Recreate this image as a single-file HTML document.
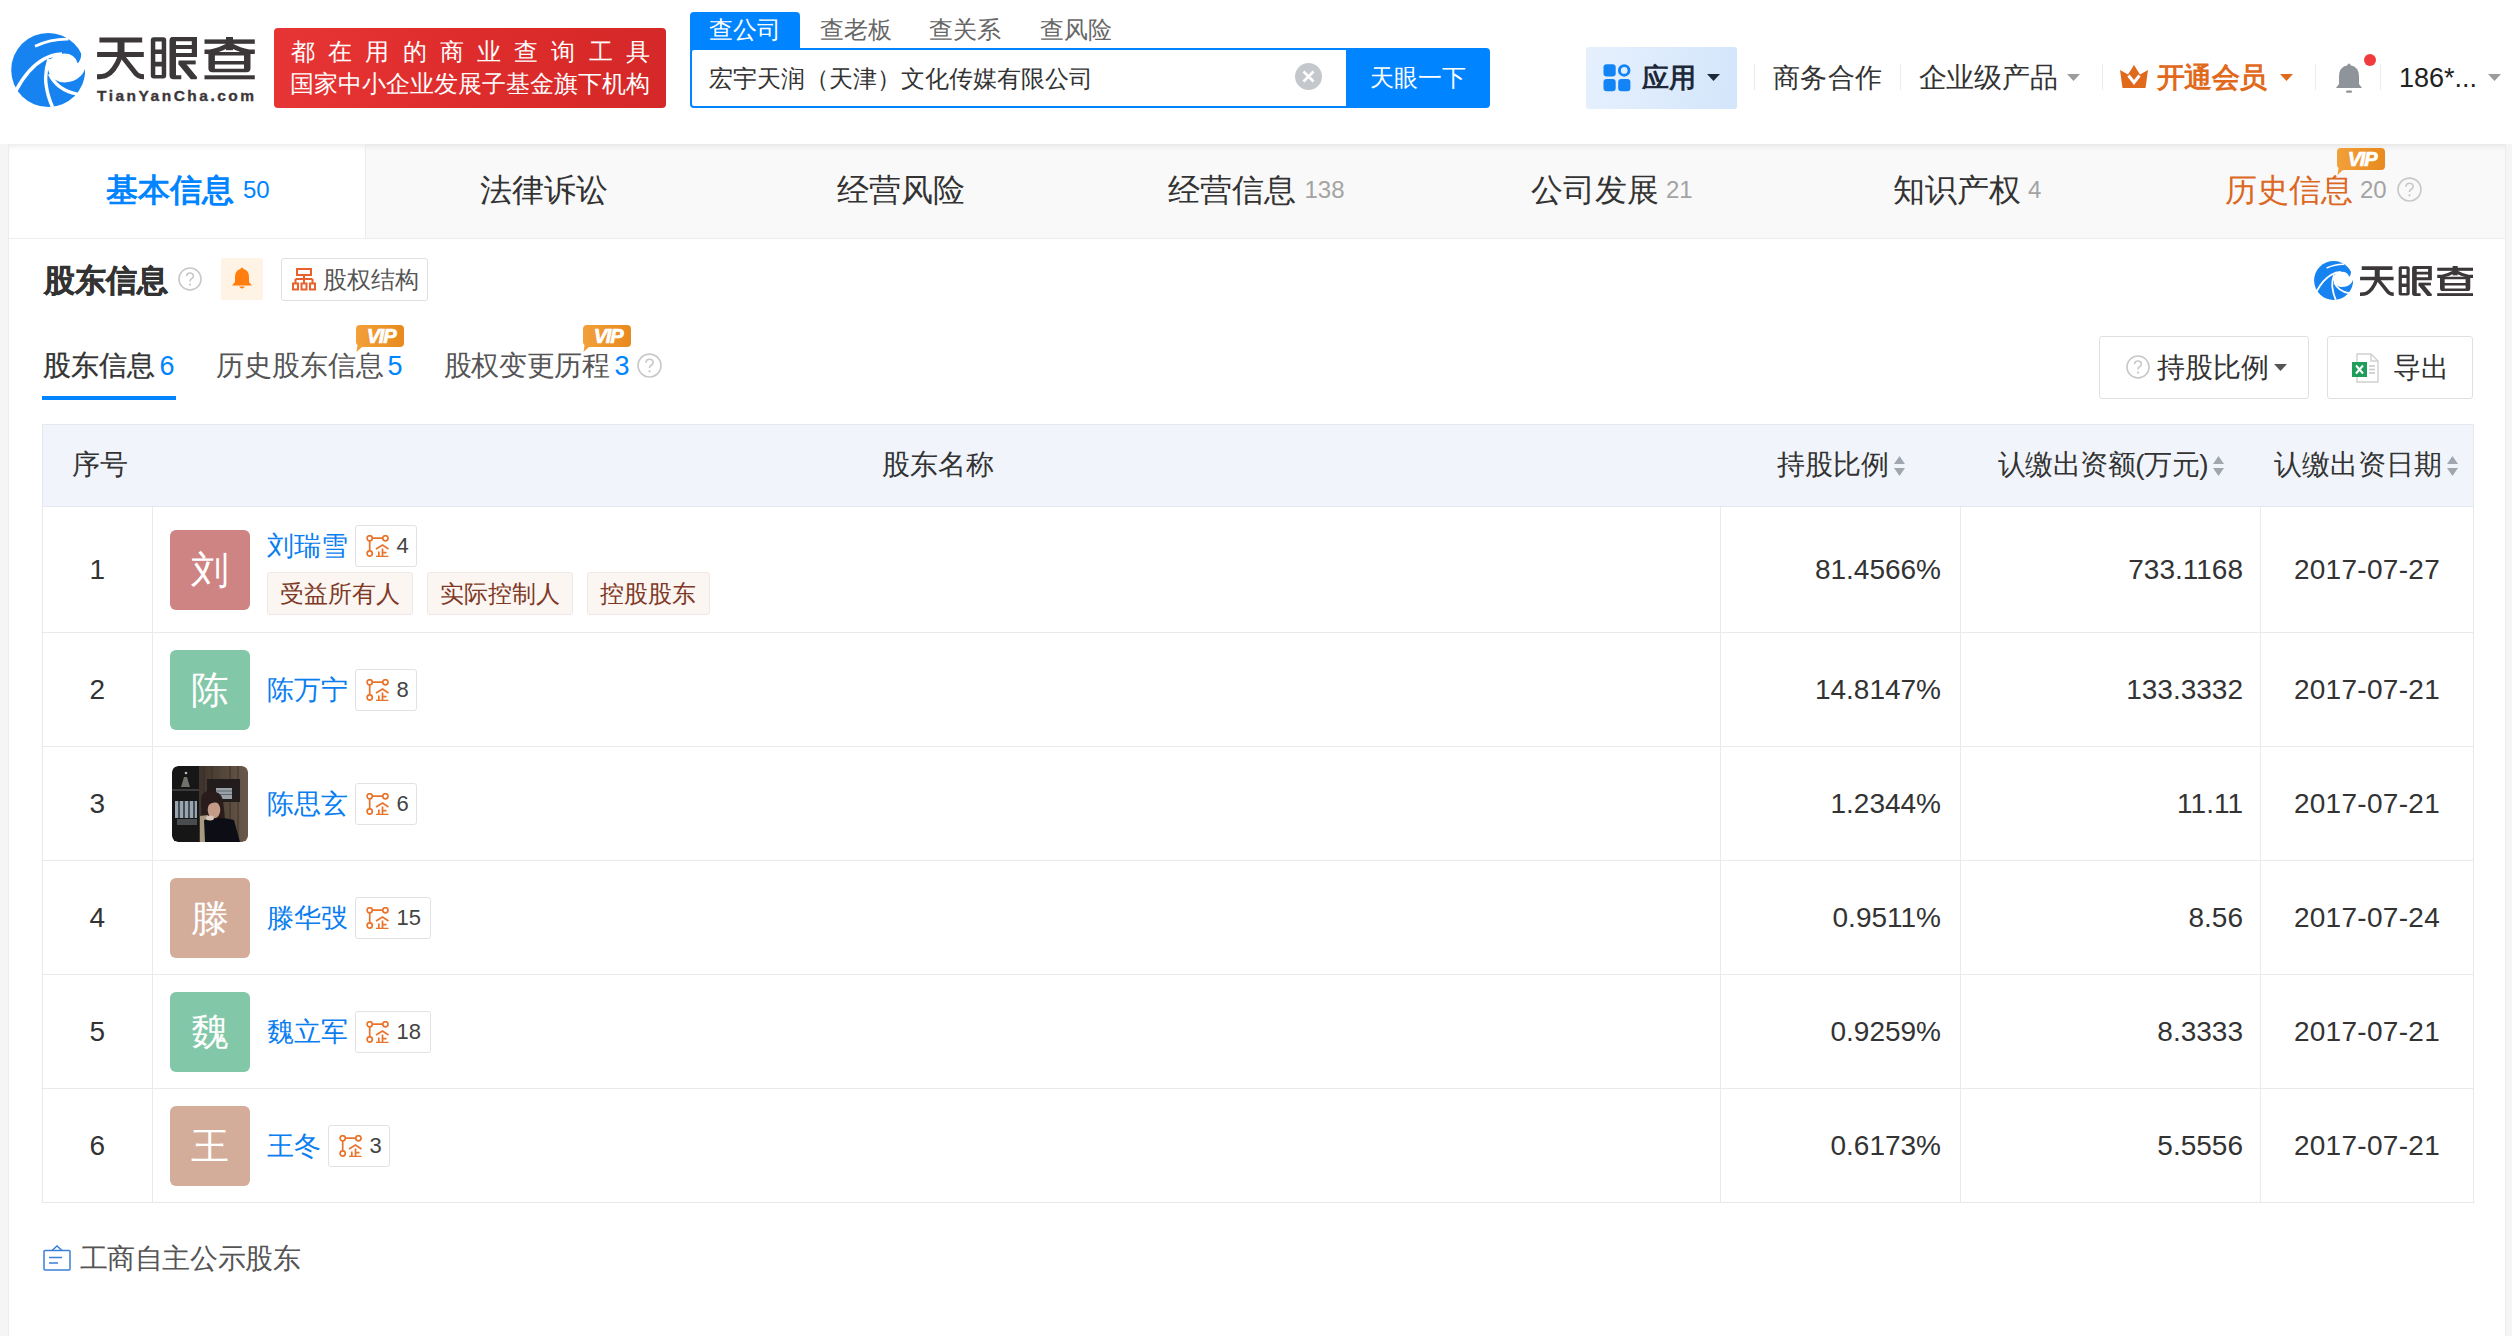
<!DOCTYPE html>
<html><head><meta charset="utf-8">
<style>
*{margin:0;padding:0;box-sizing:border-box}
html,body{width:2512px;height:1336px;overflow:hidden;background:#fff}
body{position:relative;font-family:"Liberation Sans",sans-serif;color:#333}
.a{position:absolute;white-space:nowrap}
.t{position:absolute;white-space:nowrap;line-height:40px;height:40px}
svg{display:block}
</style></head><body>
<svg width="0" height="0" style="position:absolute">
 <defs>
  <symbol id="lgIcon" viewBox="11 33 74 74">
   <circle cx="48.2" cy="70" r="37" fill="#1683f1"/>
   <path d="M66 36.5 Q78.5 42 81 52 Q82 59 77.5 63.5 L88 66 L92 28 Z" fill="#fff"/>
   <path d="M47.5 63 Q52 54.5 64 53.5 Q75 53.5 77.5 63 L86 64 Q85 76 73 81 Q62 84.5 54.5 79.5 Q46.5 73 47.5 63 Z" fill="#fff"/>
   <path d="M16 90.5 Q28 68 44 59 Q52 54.5 62 54" stroke="#fff" stroke-width="3.6" fill="none"/>
   <path d="M35 46.3 Q51 38.8 68.5 39.2" stroke="#fff" stroke-width="2.8" fill="none"/>
   <path d="M49 59 Q44.5 72 46 84 Q47.5 96 52.5 107" stroke="#fff" stroke-width="3.4" fill="none"/>
   <path d="M49.5 74 Q57 90 77 94" stroke="#fff" stroke-width="3.3" fill="none"/>
  </symbol>
  <symbol id="lgText" viewBox="97 37 158 43">
   <g fill="none" stroke="#3c3739" stroke-width="5">
    <path d="M99.4 40 H142.2"/>
    <path d="M97.1 54.5 H143.8"/>
    <path d="M121 42 V54" stroke-width="7"/>
    <path d="M120.5 56 C117 65 112 73 106 75.5 Q103 76.8 97 76.8"/>
    <path d="M122 56 L135 72.5 Q138 76.8 144 76.8"/>
   </g>
   <g fill="#3c3739">
    <path fill-rule="evenodd" d="M153.8 37.3 H163.2 Q166.2 37.3 166.2 40.3 V75.6 Q166.2 78.6 163.2 78.6 H153.8 Q150.8 78.6 150.8 75.6 V40.3 Q150.8 37.3 153.8 37.3 Z M155.3 41.4 V49.4 H161.7 V41.4 Z M155.3 53.9 V61.8 H161.7 V53.9 Z M155.3 66.6 V74.9 H161.7 V66.6 Z"/>
    <path d="M173 36.8 H197 V57 H176 V75.3 H181.3 V79.3 H173.5 Q169.5 79.3 169.5 75.3 V40.3 Q169.5 36.8 173 36.8 Z M176 41.2 V53 H191.8 V49 H176 V45.1 H191.8 V41.2 Z" fill-rule="evenodd"/>
    <rect x="178.6" y="60.5" width="17.1" height="3.9"/>
    <path d="M178.6 62 L184.6 62 L197.2 77.2 L196.6 79.3 L190.8 79.3 L178.6 64.6 Z"/>
    <rect x="204.5" y="39.4" width="50.3" height="4.4"/>
    <rect x="226" y="36.8" width="7" height="13.4"/>
    <path fill-rule="evenodd" d="M208.4 52.1 H250.5 V68.3 Q250.5 72.3 246.5 72.3 H212.4 Q208.4 72.3 208.4 68.3 Z M214.9 55.6 V60.9 H244 V55.6 Z M214.9 64.4 V68.8 H244 V64.4 Z"/>
    <rect x="204.5" y="75.3" width="50.3" height="4"/>
   </g>
   <g fill="none" stroke="#3c3739" stroke-width="4.4">
    <path d="M228.5 45 Q219 50.5 210 51.7 H204.5"/>
    <path d="M230.5 45 Q240 50.5 249 51.7 H254.8"/>
   </g>
  </symbol>
  <symbol id="netIco" viewBox="0 0 22 22">
   <g fill="none" stroke="#e8742c" stroke-width="1.7">
    <circle cx="3.2" cy="3.2" r="2.6"/><circle cx="18.9" cy="3.2" r="2.6"/><circle cx="3.2" cy="18.5" r="2.6"/>
    <path d="M5.8 3.2 H16.3 M3.2 5.8 V15.9"/>
    <path d="M9.5 14 L16 10 L22 14" />
    <path d="M16 13.5 V21.5 M12.3 16.5 V21.5 M16 17.7 H20 M9.5 21.5 H22" />
   </g>
  </symbol>
  <symbol id="vip" viewBox="0 0 48 27">
   <defs><linearGradient id="vg" x1="0" y1="0" x2="1" y2="0"><stop offset="0" stop-color="#f2a03a"/><stop offset="1" stop-color="#e88a1e"/></linearGradient></defs>
   <path d="M4 0 H44 Q48 0 48 4 V18 Q48 22 44 22 H6 L0.5 27 L1.5 20 Q0 19 0 17 V4 Q0 0 4 0 Z" fill="url(#vg)"/>
   <text x="25" y="18.2" text-anchor="middle" font-family="Liberation Sans" font-weight="bold" font-style="italic" font-size="20" fill="#fff" stroke="#fff" stroke-width="0.7" letter-spacing="-1.2">VIP</text>
  </symbol>
  <symbol id="qIco" viewBox="0 0 24 24">
   <circle cx="12" cy="12" r="11" fill="none" stroke="#c8c8c8" stroke-width="1.6"/>
   <path d="M8.6 9.3 Q8.6 6 12 6 Q15.4 6 15.4 9 Q15.4 11 13.2 12 Q12 12.6 12 14.5" fill="none" stroke="#c8c8c8" stroke-width="1.6"/>
   <circle cx="12" cy="17.6" r="1.1" fill="#c8c8c8"/>
  </symbol>
  <symbol id="sortIco" viewBox="0 0 11 20">
   <path d="M5.5 0 L11 8 H0 Z M0 12 H11 L5.5 20 Z" fill="#a0a6b0"/>
  </symbol>
 </defs>
</svg>

<!-- page gutters -->
<div class="a" style="left:0;top:144px;width:9px;height:1192px;background:#f5f5f5;border-right:1px solid #ececec"></div>
<div class="a" style="left:2505px;top:144px;width:7px;height:1192px;background:#f5f5f5;border-left:1px solid #ececec"></div>

<!-- HEADER -->
<div class="a" style="left:0;top:0;width:2512px;height:144px;background:#fff"></div>
<svg class="a" style="left:11px;top:33px" width="74" height="74"><use href="#lgIcon"/></svg>
<svg class="a" style="left:97px;top:37px" width="158" height="43"><use href="#lgText"/></svg>
<div class="a" style="left:97px;top:86px;font-size:15.5px;font-weight:bold;letter-spacing:2.5px;line-height:20px;color:#3c3739;-webkit-text-stroke:0.35px #3c3739">TianYanCha.com</div>

<div class="a" style="left:274px;top:28px;width:392px;height:80px;border-radius:4px;background:linear-gradient(90deg,#e73535,#de2c2c 50%,#d52828)"></div>
<div class="t" style="left:291px;top:32px;font-size:24px;color:#fff;letter-spacing:13.2px">都在用的商业查询工具</div>
<div class="t" style="left:290px;top:63.5px;font-size:24px;color:#fff">国家中小企业发展子基金旗下机构</div>

<div class="a" style="left:690px;top:12px;width:110px;height:38px;background:#0084ff;border-radius:4px 4px 0 0"></div>
<div class="t" style="left:709px;top:9.5px;font-size:24px;color:#fff">查公司</div>
<div class="t" style="left:819.5px;top:9.5px;font-size:24px;color:#666">查老板</div>
<div class="t" style="left:929px;top:9.5px;font-size:24px;color:#666">查关系</div>
<div class="t" style="left:1039.5px;top:9.5px;font-size:24px;color:#666">查风险</div>

<div class="a" style="left:690px;top:48px;width:660px;height:60px;border:2px solid #0084ff;border-radius:4px 0 0 4px;background:#fff"></div>
<div class="t" style="left:708.5px;top:59px;font-size:24px;color:#333">宏宇天润（天津）文化传媒有限公司</div>
<div class="a" style="left:1294.5px;top:63px;width:27px;height:27px;border-radius:50%;background:#c4c7cb"></div>
<svg class="a" style="left:1294.5px;top:63px" width="27" height="27"><path d="M8.5 8.5 L18.5 18.5 M18.5 8.5 L8.5 18.5" stroke="#fff" stroke-width="2.6"/></svg>
<div class="a" style="left:1346px;top:48px;width:144px;height:60px;background:#0084ff;border-radius:0 4px 4px 0"></div>
<div class="t" style="left:1369.5px;top:57.5px;font-size:24px;color:#fff">天眼一下</div>

<div class="a" style="left:1586px;top:47px;width:151px;height:62px;border-radius:3px;background:linear-gradient(100deg,#e6f0fd,#dbeafc 60%,#d3e5fb)"></div>
<svg class="a" style="left:1603px;top:64px" width="28" height="28" viewBox="0 0 28 28">
 <rect x="0.5" y="0.3" width="12.2" height="12.2" rx="3.2" fill="#1384f5"/>
 <circle cx="21.2" cy="6.4" r="4.8" fill="none" stroke="#1384f5" stroke-width="2.9"/>
 <rect x="0.5" y="15" width="12.2" height="12.2" rx="3.2" fill="#1384f5"/>
 <rect x="15.2" y="15" width="12.2" height="12.2" rx="3.2" fill="#1384f5"/>
</svg>
<div class="t" style="left:1642px;top:57.5px;font-size:27px;font-weight:bold;color:#1d2838">应用</div>
<svg class="a" style="left:1707px;top:74px" width="13" height="7"><path d="M0 0 H13 L6.5 7 Z" fill="#1d2838"/></svg>

<div class="a" style="left:1754px;top:64px;width:1px;height:26px;background:#ececec"></div>
<div class="t" style="left:1773px;top:57.5px;font-size:27px;letter-spacing:0.3px;color:#333">商务合作</div>
<div class="a" style="left:1900px;top:64px;width:1px;height:26px;background:#ececec"></div>
<div class="t" style="left:1918.5px;top:57.5px;font-size:28px;letter-spacing:-0.25px;color:#333">企业级产品</div>
<svg class="a" style="left:2067px;top:74px" width="13" height="7"><path d="M0 0 H13 L6.5 7 Z" fill="#9c9c9c"/></svg>
<div class="a" style="left:2102px;top:64px;width:1px;height:26px;background:#ececec"></div>
<svg class="a" style="left:2120px;top:65px" width="28" height="24" viewBox="0 0 28 24">
 <path d="M0 5 L8 9.5 L14 0 L20 9.5 L28 5 L25.5 23 H2.5 Z" fill="#e0691c"/>
 <path d="M8.5 10.5 L14 17.5 L19.5 10.5" fill="none" stroke="#fff" stroke-width="3"/>
</svg>
<div class="t" style="left:2156.5px;top:57.5px;font-size:28px;letter-spacing:-0.5px;font-weight:bold;color:#e0691c">开通会员</div>
<svg class="a" style="left:2280px;top:74px" width="13" height="7"><path d="M0 0 H13 L6.5 7 Z" fill="#e0691c"/></svg>
<div class="a" style="left:2315px;top:64px;width:1px;height:26px;background:#ececec"></div>
<svg class="a" style="left:2334px;top:62px" width="30" height="32" viewBox="0 0 30 32">
 <path d="M15 1.5 Q16.5 1.5 16.5 3.2 Q25 5 25 14 V22 L28 26 H2 L5 22 V14 Q5 5 13.5 3.2 Q13.5 1.5 15 1.5 Z" fill="#8f949a"/>
 <rect x="12" y="28.5" width="6" height="2.2" rx="1" fill="#8f949a"/>
</svg>
<div class="a" style="left:2364px;top:53.5px;width:12px;height:12px;border-radius:50%;background:#f03c3c"></div>
<div class="a" style="left:2380px;top:64px;width:1px;height:26px;background:#ececec"></div>
<div class="t" style="left:2399px;top:58px;font-size:27px;color:#222">186*...</div>
<svg class="a" style="left:2488px;top:74px" width="13" height="7"><path d="M0 0 H13 L6.5 7 Z" fill="#9c9c9c"/></svg>

<!-- TAB BAR -->
<div class="a" style="left:9px;top:144px;width:2496px;height:95px;background:#f9f9f9;border-bottom:1px solid #ededed;box-shadow:inset 0 6px 6px -4px rgba(0,0,0,0.09)"></div>
<div class="a" style="left:9px;top:144px;width:356px;height:94px;background:#fff;box-shadow:inset 0 6px 6px -4px rgba(0,0,0,0.09)"></div>
<div class="a" style="left:365px;top:144px;width:1px;height:95px;background:#ececec"></div>
<div class="t" style="left:106px;top:170px;font-size:32px;font-weight:bold;color:#0084ff">基本信息</div>
<div class="t" style="left:243px;top:169.5px;font-size:24px;color:#0084ff">50</div>
<div class="t" style="left:480px;top:170px;font-size:32px;color:#333">法律诉讼</div>
<div class="t" style="left:836.5px;top:170px;font-size:32px;color:#333">经营风险</div>
<div class="t" style="left:1168px;top:170px;font-size:32px;color:#333">经营信息</div>
<div class="t" style="left:1304.5px;top:169.5px;font-size:24px;color:#a3a3a3">138</div>
<div class="t" style="left:1531px;top:170px;font-size:32px;color:#333">公司发展</div>
<div class="t" style="left:1666px;top:169.5px;font-size:24px;color:#a3a3a3">21</div>
<div class="t" style="left:1892.5px;top:170px;font-size:32px;color:#333">知识产权</div>
<div class="t" style="left:2028px;top:169.5px;font-size:24px;color:#a3a3a3">4</div>
<div class="t" style="left:2224.5px;top:170px;font-size:32px;color:#dc671f">历史信息</div>
<div class="t" style="left:2360px;top:169.5px;font-size:24px;color:#a3a3a3">20</div>
<svg class="a" style="left:2397px;top:177px" width="25" height="25"><use href="#qIco"/></svg>
<svg class="a" style="left:2337px;top:148px" width="48" height="27"><use href="#vip"/></svg>

<!-- SECTION HEADER -->
<div class="t" style="left:43.5px;top:260.5px;font-size:31px;font-weight:bold;color:#333;-webkit-text-stroke:0.5px #333">股东信息</div>
<svg class="a" style="left:178px;top:267px" width="24" height="24"><use href="#qIco"/></svg>
<div class="a" style="left:221px;top:258px;width:42px;height:42px;border-radius:3px;background:#fff3e6"></div>
<svg class="a" style="left:231px;top:267px" width="22" height="23" viewBox="0 0 22 23">
 <path d="M11 0.5 Q12.3 0.5 12.5 2 Q18 3.5 18 10 V15 L21 18.5 H1 L4 15 V10 Q4 3.5 9.5 2 Q9.7 0.5 11 0.5 Z" fill="#ff7e0d"/>
 <path d="M8 19.5 Q11 23.5 14 19.5 Z" fill="#ff7e0d"/>
</svg>
<div class="a" style="left:281px;top:258px;width:147px;height:43px;border:1px solid #e0e0e0;border-radius:3px;background:#fff"></div>
<svg class="a" style="left:292px;top:268px" width="24" height="23" viewBox="0 0 24 23">
 <g fill="none" stroke="#e8612c" stroke-width="2">
  <rect x="5" y="1" width="14" height="6"/>
  <path d="M12 7 V11 M3.5 11 H20.5 M3.5 11 V15 M12 11 V15 M20.5 11 V15"/>
  <rect x="1" y="15.5" width="5" height="6"/><rect x="9.5" y="15.5" width="5" height="6"/><rect x="18" y="15.5" width="5" height="6"/>
 </g>
</svg>
<div class="t" style="left:323px;top:259.5px;font-size:24px;color:#555">股权结构</div>

<svg class="a" style="left:2314px;top:261px" width="39" height="39"><use href="#lgIcon"/></svg>
<svg class="a" style="left:2359.5px;top:265.5px" width="113.5" height="30.5" preserveAspectRatio="none" viewBox="97 37 158 43"><use href="#lgText" x="97" y="37" width="158" height="43"/></svg>

<!-- SUB TABS -->
<div class="t" style="left:42.5px;top:346px;font-size:28px;color:#333;-webkit-text-stroke:0.3px #333">股东信息</div>
<div class="t" style="left:159.5px;top:346px;font-size:27px;color:#0084ff">6</div>
<div class="a" style="left:42px;top:396px;width:134px;height:4px;background:#0084ff"></div>
<div class="t" style="left:215.5px;top:346px;font-size:28px;color:#555">历史股东信息</div>
<div class="t" style="left:387.5px;top:346px;font-size:27px;color:#0084ff">5</div>
<svg class="a" style="left:356px;top:325px" width="48" height="27"><use href="#vip"/></svg>
<div class="t" style="left:443.5px;top:346px;font-size:28px;letter-spacing:-0.3px;color:#555">股权变更历程</div>
<div class="t" style="left:614.5px;top:346px;font-size:27px;color:#0084ff">3</div>
<svg class="a" style="left:637px;top:353px" width="25" height="25"><use href="#qIco"/></svg>
<svg class="a" style="left:583px;top:325px" width="48" height="27"><use href="#vip"/></svg>

<div class="a" style="left:2099px;top:336px;width:210px;height:63px;border:1px solid #e0e0e0;border-radius:3px"></div>
<svg class="a" style="left:2126px;top:355px" width="24" height="24"><use href="#qIco"/></svg>
<div class="t" style="left:2157px;top:348px;font-size:28px;color:#333">持股比例</div>
<svg class="a" style="left:2274px;top:364px" width="13" height="7"><path d="M0 0 H13 L6.5 7 Z" fill="#555"/></svg>
<div class="a" style="left:2327px;top:336px;width:146px;height:63px;border:1px solid #e0e0e0;border-radius:3px"></div>
<svg class="a" style="left:2352px;top:353px" width="28" height="30" viewBox="0 0 28 30">
 <path d="M5 1 H19 L26 8 V29 H5 Z" fill="#fff" stroke="#d0d0d0" stroke-width="1.4"/>
 <path d="M19 1 V8 H26" fill="none" stroke="#d0d0d0" stroke-width="1.4"/>
 <rect x="0" y="9" width="15" height="15" fill="#1f9e5b"/>
 <path d="M4 12.5 L11 20.5 M11 12.5 L4 20.5" stroke="#fff" stroke-width="2"/>
 <path d="M17 13 H23 M17 16.5 H23 M17 20 H23" stroke="#c8c8c8" stroke-width="1.5"/>
</svg>
<div class="t" style="left:2392.5px;top:347.5px;font-size:28px;color:#333">导出</div>

<!-- TABLE -->
<div class="a" style="left:42px;top:424px;width:2432px;height:779px;border:1px solid #e6e8eb;background:#fff"></div>
<div class="a" style="left:43px;top:425px;width:2430px;height:82px;background:#f1f5fb;border-bottom:1px solid #e3e8ee"></div>
<div class="t" style="left:71.5px;top:445px;font-size:28px;color:#333">序号</div>
<div class="t" style="left:881.5px;top:445px;font-size:28px;color:#333">股东名称</div>
<div class="t" style="left:1776.5px;top:445px;font-size:28px;color:#333">持股比例</div>
<svg class="a" style="left:1894px;top:456px" width="11" height="20"><use href="#sortIco"/></svg>
<div class="t" style="left:1997.5px;top:445px;font-size:28px;letter-spacing:-0.45px;color:#333">认缴出资额(万元)</div>
<svg class="a" style="left:2213px;top:456px" width="11" height="20"><use href="#sortIco"/></svg>
<div class="t" style="left:2273.5px;top:445px;font-size:28px;color:#333">认缴出资日期</div>
<svg class="a" style="left:2447px;top:456px" width="11" height="20"><use href="#sortIco"/></svg>
<div class="a" style="left:152px;top:507px;width:1px;height:696px;background:#eaeaea"></div>
<div class="a" style="left:1720px;top:507px;width:1px;height:696px;background:#eaeaea"></div>
<div class="a" style="left:1960px;top:507px;width:1px;height:696px;background:#eaeaea"></div>
<div class="a" style="left:2260px;top:507px;width:1px;height:696px;background:#eaeaea"></div>

<div class="a" style="left:43px;top:632px;width:2430px;height:1px;background:#eaeaea"></div>
<div class="t" style="left:43px;width:109px;text-align:center;letter-spacing:0.3px;top:550.0px;font-size:28px;color:#333">1</div>
<div class="a" style="left:170px;top:530.0px;width:80px;height:80px;border-radius:6px;background:#cf8484;color:#fff;font-size:38px;line-height:80px;text-align:center">刘</div>
<div class="t" style="left:266.5px;top:526.0px;font-size:27px;color:#0a7ef0">刘瑞雪</div><div class="a" style="left:354.5px;top:525.0px;width:62px;height:42px;border:1px solid #e2e2e2;border-radius:3px"></div><svg class="a" style="left:365.5px;top:535.0px" width="23" height="22"><use href="#netIco"/></svg><div class="t" style="left:396.5px;top:526.0px;font-size:22px;color:#444">4</div>
<div class="a" style="left:266.5px;top:572px;width:146px;height:43px;border:1px solid #efe8e5;border-radius:3px;background:#fcf6f3;color:#7e3a26;font-size:24px;line-height:41px;text-align:center">受益所有人</div>
<div class="a" style="left:426.5px;top:572px;width:146px;height:43px;border:1px solid #efe8e5;border-radius:3px;background:#fcf6f3;color:#7e3a26;font-size:24px;line-height:41px;text-align:center">实际控制人</div>
<div class="a" style="left:586.5px;top:572px;width:123px;height:43px;border:1px solid #efe8e5;border-radius:3px;background:#fcf6f3;color:#7e3a26;font-size:24px;line-height:41px;text-align:center">控股股东</div>
<div class="t" style="left:1721px;width:220px;text-align:right;top:549.5px;font-size:28px;color:#333">81.4566%</div>
<div class="t" style="left:1961px;width:282px;text-align:right;top:549.5px;font-size:28px;color:#333">733.1168</div>
<div class="t" style="left:2261px;width:212px;text-align:center;letter-spacing:0.3px;top:549.5px;font-size:28px;color:#333">2017-07-27</div>
<div class="a" style="left:43px;top:746px;width:2430px;height:1px;background:#eaeaea"></div>
<div class="t" style="left:43px;width:109px;text-align:center;letter-spacing:0.3px;top:670.0px;font-size:28px;color:#333">2</div>
<div class="a" style="left:170px;top:650.0px;width:80px;height:80px;border-radius:6px;background:#82c7a7;color:#fff;font-size:38px;line-height:80px;text-align:center">陈</div>
<div class="t" style="left:266.5px;top:670.0px;font-size:27px;color:#0a7ef0">陈万宁</div><div class="a" style="left:354.5px;top:669.0px;width:62px;height:42px;border:1px solid #e2e2e2;border-radius:3px"></div><svg class="a" style="left:365.5px;top:679.0px" width="23" height="22"><use href="#netIco"/></svg><div class="t" style="left:396.5px;top:670.0px;font-size:22px;color:#444">8</div>
<div class="t" style="left:1721px;width:220px;text-align:right;top:669.5px;font-size:28px;color:#333">14.8147%</div>
<div class="t" style="left:1961px;width:282px;text-align:right;top:669.5px;font-size:28px;color:#333">133.3332</div>
<div class="t" style="left:2261px;width:212px;text-align:center;letter-spacing:0.3px;top:669.5px;font-size:28px;color:#333">2017-07-21</div>
<div class="a" style="left:43px;top:860px;width:2430px;height:1px;background:#eaeaea"></div>
<div class="t" style="left:43px;width:109px;text-align:center;letter-spacing:0.3px;top:784.0px;font-size:28px;color:#333">3</div>
<svg class="a" style="left:172px;top:766px;border-radius:6px" width="76" height="76" viewBox="0 0 76 76">
<defs><clipPath id="pc"><rect width="76" height="76" rx="6"/></clipPath>
<linearGradient id="wood" x1="0" x2="1"><stop offset="0" stop-color="#3e342c"/><stop offset="0.5" stop-color="#54463a"/><stop offset="1" stop-color="#6a5a4b"/></linearGradient></defs>
<filter id="pblur"><feGaussianBlur stdDeviation="0.55"/></filter><g clip-path="url(#pc)"><g filter="url(#pblur)">
<rect width="76" height="76" fill="#141313"/>
<rect x="27" y="0" width="49" height="76" fill="url(#wood)"/>
<path d="M32 0V76M40 0V76M58 0V76M66 0V76" stroke="#3a2f27" stroke-width="1.5" opacity="0.6"/>
<rect x="35" y="13" width="33" height="23" fill="#221d1a"/>
<rect x="44" y="22" width="16" height="11" fill="#9aa1a8"/>
<path d="M44 25H60M44 28.5H60" stroke="#5d646b" stroke-width="1"/>
<path d="M9 21 L12 11 L15 11 L18 21 Z" fill="#6f726c"/>
<circle cx="14" cy="7" r="1.3" fill="#b9bdb3"/>
<rect x="0" y="23" width="27" height="2" fill="#3a3a3a"/>
<rect x="3" y="35" width="22" height="17" fill="#98a4b0"/>
<path d="M7 35V52M12 35V52M17 35V52M22 35V52" stroke="#2a2e33" stroke-width="1.5"/>
<rect x="5" y="53" width="20" height="6" fill="#4a4d4f"/>
<path d="M29 34 Q29 25 38 25 Q49 25 51 34 L54 62 L30 62 Z" fill="#2b1f1a"/>
<ellipse cx="42" cy="44" rx="6.3" ry="8.5" fill="#c49b86"/>
<path d="M34 37 Q38 31 46 33 L47 37 Q40 35 35 40 Z" fill="#2b1f1a"/>
<path d="M28 50 L36 49 L37 76 L28 76 Z" fill="#a89a80"/>
<path d="M32 54 Q48 50 62 54 L68 76 L33 76 Z" fill="#111012"/>
<ellipse cx="38" cy="52" rx="4" ry="2.5" fill="#d8c8bb"/>
</g></g></svg>
<div class="t" style="left:266.5px;top:784.0px;font-size:27px;color:#0a7ef0">陈思玄</div><div class="a" style="left:354.5px;top:783.0px;width:62px;height:42px;border:1px solid #e2e2e2;border-radius:3px"></div><svg class="a" style="left:365.5px;top:793.0px" width="23" height="22"><use href="#netIco"/></svg><div class="t" style="left:396.5px;top:784.0px;font-size:22px;color:#444">6</div>
<div class="t" style="left:1721px;width:220px;text-align:right;top:783.5px;font-size:28px;color:#333">1.2344%</div>
<div class="t" style="left:1961px;width:282px;text-align:right;top:783.5px;font-size:28px;color:#333">11.11</div>
<div class="t" style="left:2261px;width:212px;text-align:center;letter-spacing:0.3px;top:783.5px;font-size:28px;color:#333">2017-07-21</div>
<div class="a" style="left:43px;top:974px;width:2430px;height:1px;background:#eaeaea"></div>
<div class="t" style="left:43px;width:109px;text-align:center;letter-spacing:0.3px;top:898.0px;font-size:28px;color:#333">4</div>
<div class="a" style="left:170px;top:878.0px;width:80px;height:80px;border-radius:6px;background:#d3ac9a;color:#fff;font-size:38px;line-height:80px;text-align:center">滕</div>
<div class="t" style="left:266.5px;top:898.0px;font-size:27px;color:#0a7ef0">滕华弢</div><div class="a" style="left:354.5px;top:897.0px;width:76px;height:42px;border:1px solid #e2e2e2;border-radius:3px"></div><svg class="a" style="left:365.5px;top:907.0px" width="23" height="22"><use href="#netIco"/></svg><div class="t" style="left:396.5px;top:898.0px;font-size:22px;color:#444">15</div>
<div class="t" style="left:1721px;width:220px;text-align:right;top:897.5px;font-size:28px;color:#333">0.9511%</div>
<div class="t" style="left:1961px;width:282px;text-align:right;top:897.5px;font-size:28px;color:#333">8.56</div>
<div class="t" style="left:2261px;width:212px;text-align:center;letter-spacing:0.3px;top:897.5px;font-size:28px;color:#333">2017-07-24</div>
<div class="a" style="left:43px;top:1088px;width:2430px;height:1px;background:#eaeaea"></div>
<div class="t" style="left:43px;width:109px;text-align:center;letter-spacing:0.3px;top:1012.0px;font-size:28px;color:#333">5</div>
<div class="a" style="left:170px;top:992.0px;width:80px;height:80px;border-radius:6px;background:#82c7a7;color:#fff;font-size:38px;line-height:80px;text-align:center">魏</div>
<div class="t" style="left:266.5px;top:1012.0px;font-size:27px;color:#0a7ef0">魏立军</div><div class="a" style="left:354.5px;top:1011.0px;width:76px;height:42px;border:1px solid #e2e2e2;border-radius:3px"></div><svg class="a" style="left:365.5px;top:1021.0px" width="23" height="22"><use href="#netIco"/></svg><div class="t" style="left:396.5px;top:1012.0px;font-size:22px;color:#444">18</div>
<div class="t" style="left:1721px;width:220px;text-align:right;top:1011.5px;font-size:28px;color:#333">0.9259%</div>
<div class="t" style="left:1961px;width:282px;text-align:right;top:1011.5px;font-size:28px;color:#333">8.3333</div>
<div class="t" style="left:2261px;width:212px;text-align:center;letter-spacing:0.3px;top:1011.5px;font-size:28px;color:#333">2017-07-21</div>
<div class="t" style="left:43px;width:109px;text-align:center;letter-spacing:0.3px;top:1126.0px;font-size:28px;color:#333">6</div>
<div class="a" style="left:170px;top:1106.0px;width:80px;height:80px;border-radius:6px;background:#d3ac9a;color:#fff;font-size:38px;line-height:80px;text-align:center">王</div>
<div class="t" style="left:266.5px;top:1126.0px;font-size:27px;color:#0a7ef0">王冬</div><div class="a" style="left:327.5px;top:1125.0px;width:62px;height:42px;border:1px solid #e2e2e2;border-radius:3px"></div><svg class="a" style="left:338.5px;top:1135.0px" width="23" height="22"><use href="#netIco"/></svg><div class="t" style="left:369.5px;top:1126.0px;font-size:22px;color:#444">3</div>
<div class="t" style="left:1721px;width:220px;text-align:right;top:1125.5px;font-size:28px;color:#333">0.6173%</div>
<div class="t" style="left:1961px;width:282px;text-align:right;top:1125.5px;font-size:28px;color:#333">5.5556</div>
<div class="t" style="left:2261px;width:212px;text-align:center;letter-spacing:0.3px;top:1125.5px;font-size:28px;color:#333">2017-07-21</div>

<!-- FOOTER -->
<svg class="a" style="left:43px;top:1245px" width="28" height="26" viewBox="0 0 28 26">
 <g fill="none" stroke="#3a7fd8" stroke-width="1.5">
  <rect x="1" y="5.5" width="26" height="19.5" rx="1"/>
  <path d="M9 5.5 L14 1 L19 5.5"/>
  <path d="M6 12.5 H19 M6 18 H15"/>
 </g>
</svg>
<div class="t" style="left:79.5px;top:1238.5px;font-size:28px;letter-spacing:-0.4px;color:#555">工商自主公示股东</div>
</body></html>
